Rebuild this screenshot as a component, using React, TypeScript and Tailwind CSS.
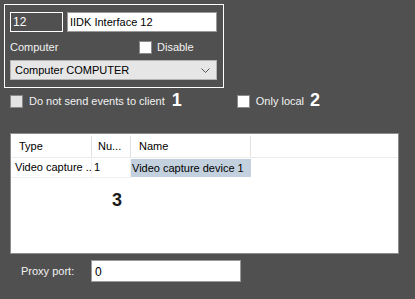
import React from 'react';

const Check = ({ dim = false }: { dim?: boolean }) => (
  <div className={`w-[13px] h-[13px] shrink-0 border border-[#8a8a8a] ${dim ? 'bg-[#e4e4e4]' : 'bg-white'}`} />
);

const Marker = ({ n }: { n: string }) => (
  <span className="text-[18px] font-bold leading-none text-white">{n}</span>
);

export default function App() {
  return (
    <div
      className="w-[415px] h-[299px] bg-[#505050] text-[11px] text-[#f2f2f2] overflow-hidden pt-[4px]"
      style={{ fontFamily: '"Liberation Sans", Arial, sans-serif' }}
    >
      {/* interface block */}
      <div className="ml-[4px] w-[220px] h-[84px] border border-white pl-[5px] pt-[7px]">
        <div className="flex gap-[4px]">
          <div className="w-[53px] h-[20px] border border-white flex items-center px-[2px] text-[12px] text-white">12</div>
          <div className="w-[150px] h-[20px] bg-white border border-[#9a9a9a] flex items-center px-[2px] text-[11px] text-black">
            IIDK Interface 12
          </div>
        </div>
        <div className="flex items-center h-[14px] mt-[8px]">
          <span className="w-[129px]">Computer</span>
          <Check />
          <span className="ml-[5px]">Disable</span>
        </div>
        <div className="mt-[6px] w-[207px] h-[20px] bg-[#e6e6e6] border border-[#b5b5b5] flex items-center justify-between pl-[4px] pr-[6px] text-black">
          <span>Computer COMPUTER</span>
          <svg width="9" height="6" viewBox="0 0 9 6" className="mt-[1px]">
            <path d="M0.5 0.5 L4.5 4.5 L8.5 0.5" stroke="#555" strokeWidth="1" fill="none" />
          </svg>
        </div>
      </div>

      {/* options */}
      <div className="flex items-center h-[14px] mt-[6px] pl-[10px]">
        <Check dim />
        <span className="ml-[6px]">Do not send events to client</span>
        <span className="ml-[7px]"><Marker n="1" /></span>
        <div className="ml-[55px] flex items-center">
          <Check />
          <span className="ml-[6px]">Only local</span>
          <span className="ml-[6px]"><Marker n="2" /></span>
        </div>
      </div>

      {/* device table */}
      <div className="ml-[10px] mt-[25px] w-[389px] h-[121px] bg-white border border-[#8c8c8c] text-black">
        <div className="flex h-[22px] mt-[2px] border-b border-[#ececec]">
          <div className="w-[81px] pl-[8px] flex items-center border-r border-[#e2e2e2]">Type</div>
          <div className="w-[39px] pl-[6px] flex items-center border-r border-[#e2e2e2]">Nu...</div>
          <div className="w-[120px] pl-[8px] flex items-center border-r border-[#e2e2e2]">Name</div>
        </div>
        <div className="flex h-[20px]">
          <div className="w-[81px] pl-[4px] flex items-center border-r border-b border-[#f0f0f0] whitespace-nowrap overflow-hidden">Video capture ..</div>
          <div className="w-[39px] pl-[2px] flex items-center border-r border-b border-[#f0f0f0]">1</div>
          <div className="w-[120px] flex items-center py-[1px]">
            <div className="w-full h-full bg-[#c3d0de] pl-[1px] flex items-center">Video capture device 1</div>
          </div>
        </div>
        <div className="pl-[101px] mt-[13px]">
          <span className="text-[18px] font-bold leading-none text-[#1a1a1a]">3</span>
        </div>
      </div>

      {/* proxy */}
      <div className="flex items-center mt-[6px] pl-[21px]">
        <span className="w-[70px]">Proxy port:</span>
        <div className="w-[150px] h-[22px] bg-white border border-[#9a9a9a] pl-[3px] pt-[2px] text-[12px] text-black">0</div>
      </div>
    </div>
  );
}
